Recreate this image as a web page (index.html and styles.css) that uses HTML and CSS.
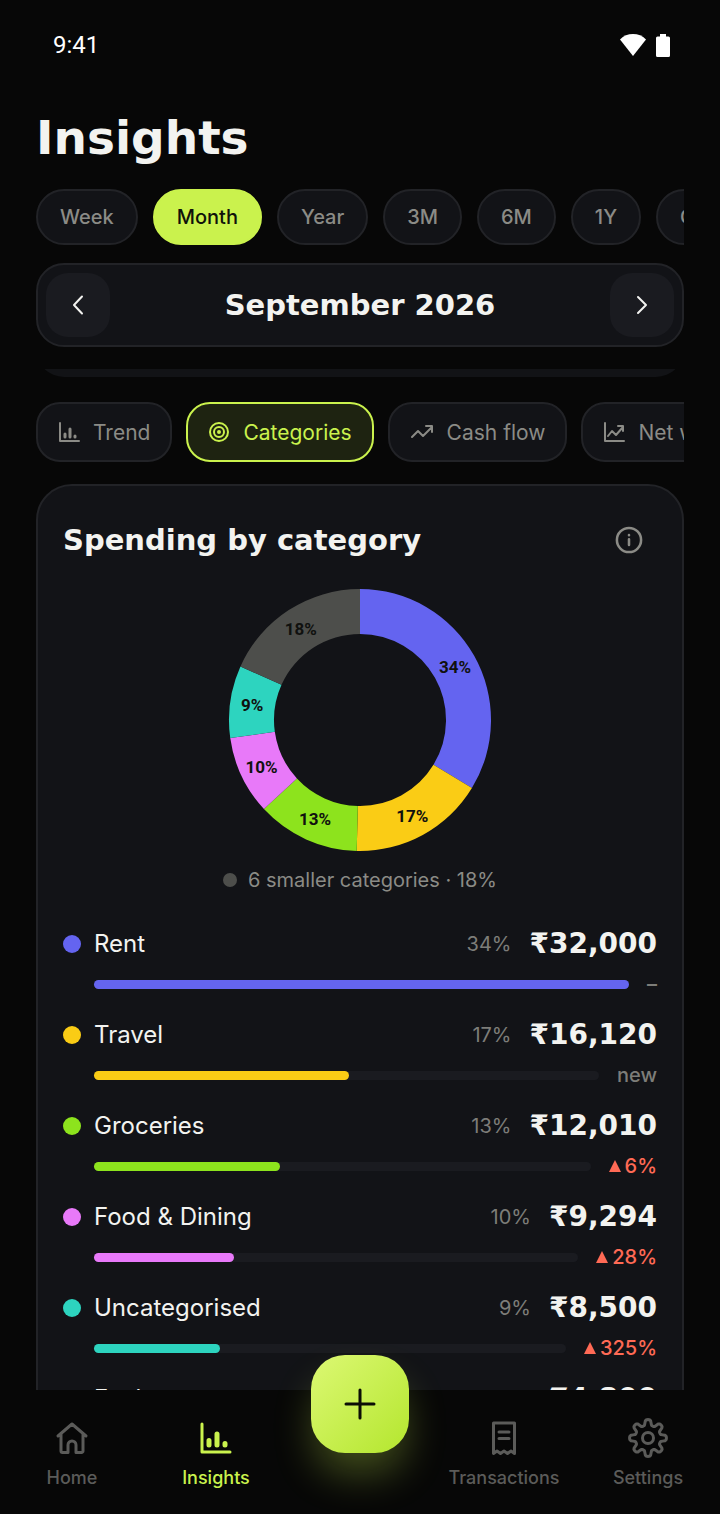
FILE: index.html
```html
<!DOCTYPE html>
<html lang="en">
<head>
    <meta charset="UTF-8">
    <meta name="viewport" content="width=device-width, initial-scale=1.0">
    <title>Insights</title>
    <link rel="stylesheet" href="styles.css">
</head>
<body>
    <div class="status-bar">
        <span>9:41</span>
        <div class="status-icons">
            <svg width="26" height="22" viewBox="0 0 26 22" fill="currentColor"><path d="M0 5.500C3.500 1.800 8 0 13 0s9.500 1.800 13 5.500L13 22z"/></svg>
            <svg width="14" height="23" viewBox="0 0 14 23" fill="currentColor"><path d="M4 0h6v2.500h2.500A1.500 1.500 0 0 1 14 4v17.500a1.500 1.500 0 0 1-1.500 1.500h-11A1.500 1.500 0 0 1 0 21.500V4a1.500 1.500 0 0 1 1.500-1.500H4z"/></svg>
        </div>
    </div>

    <header class="top">
        <h1>Insights</h1>
        <div class="ranges">
            <button class="chip">Week</button>
            <button class="chip active">Month</button>
            <button class="chip">Year</button>
            <button class="chip">3M</button>
            <button class="chip">6M</button>
            <button class="chip">1Y</button>
            <button class="chip">Custom</button>
        </div>
        <div class="period">
            <button class="step" aria-label="Previous month">
                <svg width="26" height="26" viewBox="0 0 26 26"><path d="M17 4.500 9 13l8 8.500"/></svg>
            </button>
            <h2>September 2026</h2>
            <button class="step" aria-label="Next month">
                <svg width="26" height="26" viewBox="0 0 26 26"><path d="m9 5 8 8-8 8"/></svg>
            </button>
        </div>
    </header>

    <main class="scroller">
        <div class="summary"></div>

        <div class="tabs">
            <button class="tab">
                <svg width="22" height="22" viewBox="0 0 22 22"><path d="M2 2v18h19"/><path class="thick" d="M7 13v3M12 8v8M17 15v1"/></svg>
                Trend
            </button>
            <button class="tab active">
                <svg width="22" height="22" viewBox="0 0 22 22"><circle cx="11" cy="11" r="9"/><circle cx="11" cy="11" r="5"/><circle cx="11" cy="11" r="1"/></svg>
                Categories
            </button>
            <button class="tab">
                <svg width="24" height="22" viewBox="0 0 24 22"><path d="m2 16 6-6 5 5 9-9M16 5h6v6"/></svg>
                Cash flow
            </button>
            <button class="tab">
                <svg width="22" height="22" viewBox="0 0 22 22"><path d="M2 2v18h19M5 15l4-5 4 4 7-8M15 5h5v5"/></svg>
                Net worth
            </button>
        </div>

        <section class="panel">
            <div class="panel-head">
                <h2>Spending by category</h2>
                <button class="info" aria-label="About this chart">
                    <svg width="28" height="28" viewBox="0 0 22 22"><circle cx="11" cy="11" r="9.500"/><path d="M11 10.500v4.500M11 7v0.200"/></svg>
                </button>
            </div>

            <svg class="donut" width="264" height="264" viewBox="-132 -132 264 264" role="img" aria-label="Spending split by category">
                <g id="slices"></g>
            </svg>
            <p class="legend"><span class="legend-dot"></span>6 smaller categories · 18%</p>

            <ul class="categories">
                <li class="rent">
                    <span class="dot"></span><span class="name">Rent</span><span class="share">34%</span><span class="amount">₹32,000</span>
                    <div class="meter"><div class="track"><div class="fill" style="width: 100%"></div></div><span class="change">–</span></div>
                </li>
                <li class="travel">
                    <span class="dot"></span><span class="name">Travel</span><span class="share">17%</span><span class="amount">₹16,120</span>
                    <div class="meter"><div class="track"><div class="fill" style="width: 50.4%"></div></div><span class="change">new</span></div>
                </li>
                <li class="groceries">
                    <span class="dot"></span><span class="name">Groceries</span><span class="share">13%</span><span class="amount">₹12,010</span>
                    <div class="meter"><div class="track"><div class="fill" style="width: 37.5%"></div></div><span class="change up"><i></i>6%</span></div>
                </li>
                <li class="food">
                    <span class="dot"></span><span class="name">Food &amp; Dining</span><span class="share">10%</span><span class="amount">₹9,294</span>
                    <div class="meter"><div class="track"><div class="fill" style="width: 29%"></div></div><span class="change up"><i></i>28%</span></div>
                </li>
                <li class="uncategorised">
                    <span class="dot"></span><span class="name">Uncategorised</span><span class="share">9%</span><span class="amount">₹8,500</span>
                    <div class="meter"><div class="track"><div class="fill" style="width: 26.6%"></div></div><span class="change up"><i></i>325%</span></div>
                </li>
                <li class="fuel">
                    <span class="dot"></span><span class="name">Fuel</span><span class="share">5%</span><span class="amount">₹4,800</span>
                    <div class="meter"><div class="track"><div class="fill" style="width: 15%"></div></div><span class="change">new</span></div>
                </li>
            </ul>
        </section>
    </main>

    <nav class="nav">
        <a href="#home">
            <svg width="40" height="40" viewBox="0 0 40 40"><path d="M6 18 20 6l14 12M9 16v17a1.500 1.500 0 0 0 1.500 1.500H16V27a4 4 0 0 1 8 0v7.500h5.500A1.500 1.500 0 0 0 31 33V16"/></svg>
            Home
        </a>
        <a href="#insights" class="active">
            <svg width="40" height="40" viewBox="0 0 40 40"><path d="M6 6v28h28"/><path class="thick" d="M13 22.500v4.500M21 16v11M29 25.500V27"/></svg>
            Insights
        </a>
        <button class="add" aria-label="Add transaction">
            <svg width="32" height="32" viewBox="0 0 32 32"><path d="M16 2v28M2 16h28"/></svg>
        </button>
        <a href="#transactions">
            <svg width="40" height="40" viewBox="0 0 40 40"><path d="M9.500 5h21v30.500l-3.500-2.500-3.500 2.500L20 33l-3.500 2.500L13 33l-3.500 2.500zM15 14h10M15 20.500h10"/></svg>
            Transactions
        </a>
        <a href="#settings">
            <svg width="40" height="40" viewBox="0 0 40 40"><circle cx="20" cy="20" r="5.500"/><path id="gear"/></svg>
            Settings
        </a>
    </nav>

    <script src="script.js"></script>
</body>
</html>
```
FILE: styles.css
```css
* {
    box-sizing: border-box;
}
body {
    display: flex;
    flex-direction: column;
    height: 100vh;
    margin: 0;
    overflow: hidden;
    background: #070707;
    color: #f3f3f0;
    font-family: Inter, "Noto Sans", sans-serif;
    font-size: 20px;
}
h1, h2, p, ul {
    margin: 0;
    padding: 0;
}
h1, h2, .amount {
    font-family: "DejaVu Sans", sans-serif;
    font-weight: bold;
}
h1 {
    font-size: 47px;
    line-height: 56px;
}
h2 {
    font-size: 29px;
    line-height: 36px;
}
button {
    font: inherit;
    color: inherit;
    cursor: pointer;
}
svg {
    flex: none;
}
.step svg, .tab svg, .info svg, .nav svg {
    fill: none;
    stroke: currentColor;
    stroke-width: 2;
    stroke-linecap: round;
    stroke-linejoin: round;
}

.status-bar {
    display: flex;
    flex: none;
    align-items: center;
    justify-content: space-between;
    height: 90px;
    padding: 0 50px 0 53px;
    color: white;
    font-family: Roboto, sans-serif;
    font-size: 24px;
}
.status-icons {
    display: flex;
    align-items: center;
    gap: 10px;
}

.top {
    flex: none;
    padding: 20px 36px 22px;
}
.ranges, .tabs {
    display: flex;
    gap: 14px;
    overflow: hidden;
}
.ranges {
    gap: 15px;
    margin: 23px 0 18px;
}
.chip {
    flex: none;
    height: 56px;
    padding: 0 22px;
    border: 2px solid #222327;
    border-radius: 28px;
    background: #121317;
    color: #8b8b86;
    font-weight: 500;
}
.chip.active {
    border-color: #caf24d;
    background: #caf24d;
    color: #10120a;
}
.period {
    display: flex;
    align-items: center;
    justify-content: space-between;
    height: 84px;
    padding: 0 8px;
    border: 2px solid #222327;
    border-radius: 28px;
    background: #121317;
}
.step {
    display: flex;
    align-items: center;
    justify-content: center;
    width: 64px;
    height: 64px;
    padding: 0;
    border: none;
    border-radius: 22px;
    background: #1a1b20;
}

.scroller {
    flex: 1;
    min-height: 0;
    padding: 0 36px;
    overflow: hidden;
}
.summary {
    height: 60px;
    margin: -52px 0 25px;
    border-radius: 28px;
    background: #121316;
}
.tab {
    display: flex;
    flex: none;
    align-items: center;
    gap: 13px;
    height: 60px;
    padding: 0 20px;
    border: 2px solid #222327;
    border-radius: 24px;
    background: #121317;
    color: #8b8b86;
    font-size: 21px;
}
.tab.active {
    border-color: #caf24d;
    background: #1e2311;
    color: #caf24d;
}
.tab .thick {
    stroke-width: 3;
}
.panel {
    margin-top: 22px;
    padding: 26px 25px;
    border: 2px solid #222327;
    border-radius: 36px;
    background: #121317;
}
.panel-head {
    display: flex;
    align-items: center;
    justify-content: space-between;
    height: 56px;
}
.info {
    display: flex;
    padding: 14px;
    border: none;
    background: none;
    color: #8b8b86;
}
.donut {
    display: block;
    margin: 20px auto 12px;
}
.donut text {
    fill: #10110f;
    font-family: Roboto, sans-serif;
    font-size: 17px;
    font-weight: 700;
    text-anchor: middle;
}
.legend {
    display: flex;
    align-items: center;
    justify-content: center;
    gap: 11px;
    color: #8b8b86;
    line-height: 32px;
}
.legend-dot {
    width: 14px;
    height: 14px;
    border-radius: 50%;
    background: #4d4e4b;
}

.categories {
    display: grid;
    gap: 20px;
    margin-top: 31px;
    list-style: none;
}
.categories li {
    display: grid;
    grid-template-columns: 18px 1fr auto auto;
    align-items: center;
    column-gap: 13px;
    row-gap: 9px;
    line-height: 34px;
}
.dot {
    width: 18px;
    height: 18px;
    border-radius: 50%;
}
.name {
    font-size: 24px;
}
.share {
    margin-right: 5px;
    color: #7d7d79;
}
.amount {
    font-size: 28px;
}
.meter {
    display: flex;
    grid-column: 2 / -1;
    align-items: center;
    gap: 18px;
    line-height: 28px;
}
.track {
    flex: 1;
    border-radius: 5px;
    background: #1a1b20;
}
.fill {
    height: 9px;
    border-radius: 5px;
}
.change {
    display: flex;
    align-items: center;
    gap: 4px;
    color: #7d7d79;
    font-weight: 500;
}
.change.up {
    color: #ff6a55;
}
.change i {
    border: 6px solid transparent;
    border-top: none;
    border-bottom: 12px solid #ff6a55;
}
.rent .dot, .rent .fill { background: #6464f0; }
.travel .dot, .travel .fill { background: #facc15; }
.groceries .dot, .groceries .fill { background: #8de31d; }
.food .dot, .food .fill { background: #e879f9; }
.uncategorised .dot, .uncategorised .fill { background: #2dd4bf; }
.fuel .dot, .fuel .fill { background: #f05252; }

.nav {
    position: relative;
    display: grid;
    flex: none;
    grid-template-columns: repeat(5, 1fr);
    height: 124px;
    background: #070707;
}
.nav a {
    display: flex;
    flex-direction: column;
    align-items: center;
    gap: 8px;
    padding-top: 28px;
    color: #5b5b59;
    font-size: 18px;
    font-weight: 500;
    line-height: 24px;
    text-decoration: none;
}
.nav a.active {
    color: #caf24d;
}
.nav svg {
    stroke-width: 3;
}
.nav .thick {
    stroke-width: 5;
}
.add {
    display: flex;
    align-items: center;
    justify-content: center;
    justify-self: center;
    width: 98px;
    height: 98px;
    margin-top: -35px;
    padding: 0;
    border: none;
    border-radius: 34px;
    background: linear-gradient(135deg, #dcf873, #b4e62e);
    box-shadow: 0 24px 40px -4px rgba(202, 242, 77, 0.3);
    color: #0b0d05;
}
```
FILE: script.js
```js
const slices = [
    { value: 33.7, label: "34%", color: "#6464f0" },
    { value: 16.7, label: "17%", color: "#facc15" },
    { value: 12.7, label: "13%", color: "#8de31d" },
    { value: 9.7, label: "10%", color: "#e879f9" },
    { value: 8.9, label: "9%", color: "#2dd4bf" },
    { value: 18.3, label: "18%", color: "#4d4e4b" }
];

function point(radius, percent) {
    const angle = percent / 100 * 2 * Math.PI;
    return [radius * Math.sin(angle), -radius * Math.cos(angle)];
}

// Donut
let start = 0;
let markup = "";
slices.forEach(slice => {
    const end = start + slice.value;
    const [x, y] = point(109, (start + end) / 2);
    markup += `<path fill="${slice.color}" d="M${point(131, start)} A131 131 0 0 1 ${point(131, end)} L${point(86, end)} A86 86 0 0 0 ${point(86, start)}z"/>`;
    markup += `<text x="${x}" y="${y + 6}">${slice.label}</text>`;
    start = end;
});
document.getElementById("slices").innerHTML = markup;

// Settings gear, eight rounded teeth
const outline = [];
for (let i = 0; i <= 120; i++) {
    const wave = Math.cos(i / 120 * 16 * Math.PI);
    const radius = 15.6 + 2.8 * Math.tanh(2 * wave) / Math.tanh(2);
    const [x, y] = point(radius, i / 1.2);
    outline.push(`${x + 20} ${y + 20}`);
}
document.getElementById("gear").setAttribute("d", "M" + outline.join("L") + "z");
```
